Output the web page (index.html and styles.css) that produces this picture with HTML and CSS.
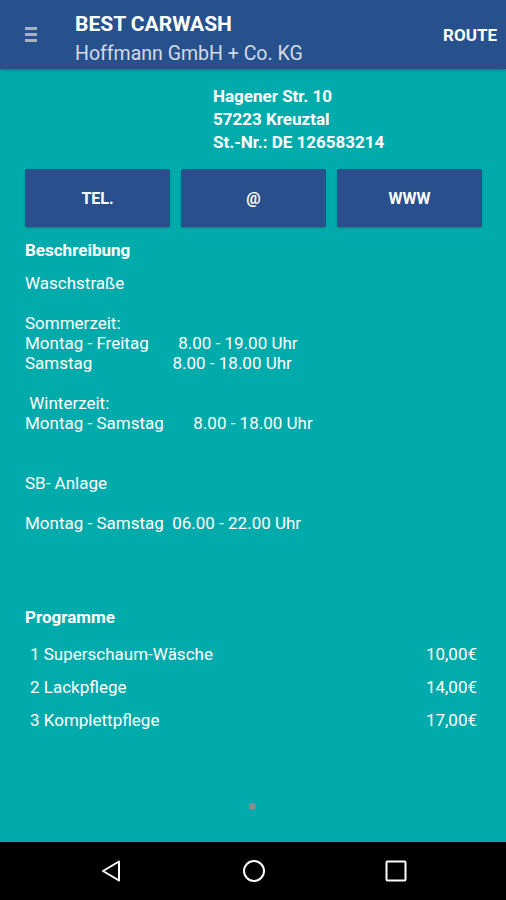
FILE: index.html
```html
<!DOCTYPE html>
<html lang="de">

<head>
    <meta charset="UTF-8">
    <meta name="viewport" content="width=device-width, initial-scale=1.0">
    <title>Best Carwash</title>
    <link rel="stylesheet" href="styles.css">
</head>

<body>

    <div class="screen">

        <header class="topbar">
            <div class="menu">
                <span></span>
                <span></span>
                <span></span>
            </div>
            <div class="titles">
                <div class="title">BEST CARWASH</div>
                <div class="subtitle">Hoffmann GmbH + Co. KG</div>
            </div>
            <div class="route">ROUTE</div>
        </header>

        <main class="content">

            <div class="address">
                <div>Hagener Str. 10</div>
                <div>57223 Kreuztal</div>
                <div>St.-Nr.: DE 126583214</div>
            </div>

            <div class="buttons">
                <button>TEL.</button>
                <button>@</button>
                <button>WWW</button>
            </div>

            <h2 class="heading">Beschreibung</h2>
            <div class="description">Waschstraße

Sommerzeit:
Montag - Freitag       8.00 - 19.00 Uhr
Samstag                   8.00 - 18.00 Uhr

 Winterzeit:
Montag - Samstag       8.00 - 18.00 Uhr


SB- Anlage

Montag - Samstag  06.00 - 22.00 Uhr</div>

            <h2 class="heading programs-heading">Programme</h2>
            <div class="programs">
                <div class="program">
                    <span>1 Superschaum-Wäsche</span>
                    <span>10,00€</span>
                </div>
                <div class="program">
                    <span>2 Lackpflege</span>
                    <span>14,00€</span>
                </div>
                <div class="program">
                    <span>3 Komplettpflege</span>
                    <span>17,00€</span>
                </div>
            </div>

            <div class="pager"><span class="dot"></span></div>

        </main>

        <nav class="navbar">
            <svg width="24" height="24" viewBox="0 0 24 24">
                <path d="M20 2.5 L4 12 L20 21.5 Z" fill="none" stroke="#fff" stroke-width="2" stroke-linejoin="round" />
            </svg>
            <svg width="24" height="24" viewBox="0 0 24 24">
                <circle cx="12" cy="12" r="10" fill="none" stroke="#fff" stroke-width="2" />
            </svg>
            <svg width="24" height="24" viewBox="0 0 24 24">
                <rect x="2.5" y="2.5" width="19" height="19" rx="1" fill="none" stroke="#fff" stroke-width="2" />
            </svg>
        </nav>

    </div>

</body>

</html>
```

FILE: styles.css
```css
body {
    margin: 0;
    font-family: Roboto, "Liberation Sans", Arial, sans-serif;
    color: #fff;
}

.screen {
    width: 506px;
    height: 900px;
    display: flex;
    flex-direction: column;
    background-color: #02abab;
}

/* top bar */

.topbar {
    height: 69px;
    flex-shrink: 0;
    display: flex;
    align-items: center;
    background-color: #27518d;
    box-shadow: 0 1px 3px rgba(0, 0, 0, 0.3);
}

.menu {
    width: 75px;
    display: flex;
    flex-direction: column;
    gap: 3px;
    padding-left: 25px;
    box-sizing: border-box;
}

.menu span {
    display: block;
    width: 12px;
    height: 3px;
    background-color: #a9b2bf;
}

.titles {
    flex: 1;
    padding-top: 8px;
}

.title {
    font-size: 21px;
    font-weight: bold;
    line-height: 26px;
}

.subtitle {
    font-size: 19.5px;
    line-height: 24px;
    margin-top: 5px;
    color: #d3dbe6;
}

.route {
    font-size: 17px;
    font-weight: bold;
    padding-right: 9px;
}

/* content */

.content {
    flex: 1;
    display: flex;
    flex-direction: column;
    padding: 0 25px;
}

.address {
    padding-top: 16px;
    padding-left: 188px;
    font-size: 17px;
    font-weight: bold;
    line-height: 23px;
}

.buttons {
    display: grid;
    grid-template-columns: repeat(3, 1fr);
    gap: 11px;
    margin-top: 15px;
    width: 457px;
}

.buttons button {
    height: 58px;
    border: none;
    border-radius: 2px;
    background-color: #29508c;
    color: #fff;
    font-family: inherit;
    font-size: 16px;
    font-weight: bold;
    box-shadow: 0 1px 2px rgba(0, 0, 0, 0.25);
}

.heading {
    margin: 13px 0 0;
    font-size: 17px;
    font-weight: bold;
    line-height: 20px;
}

.description {
    margin-top: 13px;
    font-size: 17px;
    line-height: 20px;
    white-space: pre;
}

.programs-heading {
    margin-top: 74px;
}

.programs {
    margin-top: 11px;
    padding: 0 4px 0 5px;
}

.program {
    display: flex;
    justify-content: space-between;
    font-size: 17px;
    line-height: 33px;
}

.pager {
    margin-top: auto;
    padding-bottom: 32px;
    display: flex;
    justify-content: center;
}

.dot {
    width: 7px;
    height: 7px;
    border-radius: 50%;
    background-color: #8c8c8c;
    margin-left: -2px;
}

/* system nav */

.navbar {
    height: 58px;
    flex-shrink: 0;
    background-color: #000;
    display: flex;
    align-items: center;
}

.navbar svg:nth-child(1) {
    margin-left: 99px;
}

.navbar svg:nth-child(2) {
    margin-left: 119px;
}

.navbar svg:nth-child(3) {
    margin-left: 118px;
}
```
